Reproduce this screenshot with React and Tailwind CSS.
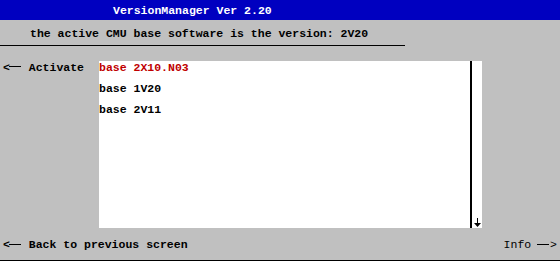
function Dash() {
  return <span className="inline-block w-[12px] h-[1px] bg-black align-middle mb-[2px] -ml-[1px] mr-[1px]" />;
}

export default function App() {
  const versions = [
    { name: "base 2X10.N03", active: true },
    { name: "base 1V20", active: false },
    { name: "base 2V11", active: false },
  ];

  return (
    <div
      className="w-[560px] h-[261px] bg-[#c0c0c0] flex flex-col text-[11.5px] font-bold text-black overflow-hidden"
      style={{ fontFamily: "'Liberation Mono', 'DejaVu Sans Mono', monospace" }}
    >
      {/* title bar */}
      <div className="h-[20px] bg-[#0000c0] text-white flex items-center pl-[113px] pt-[1px]">
        VersionManager Ver 2.20
      </div>

      {/* active version line */}
      <div className="h-[26px] w-[405px] border-b border-black flex items-center pl-[30px] pt-[2px]">
        the active CMU base software is the version: 2V20
      </div>

      {/* list area */}
      <div className="flex mt-[15px] h-[167px]">
        <div className="w-[99px] pl-[3px] leading-[11px] pt-[1px] whitespace-nowrap">
          &lt;<Dash /> Activate
        </div>
        <div className="w-[383px] bg-white flex">
          <div className="flex-1 flex flex-col gap-[10px] leading-[11px] pt-[1px]">
            {versions.map((v) => (
              <div key={v.name} className={v.active ? "text-[#c00000]" : ""}>
                {v.name}
              </div>
            ))}
          </div>
          <div className="w-[2px] bg-black" />
          <div className="w-[10px] flex flex-col justify-end items-center pb-[1px]">
            <svg width="7" height="9" viewBox="0 0 7 9">
              <rect x="3" y="0" width="1" height="8" fill="black" />
              <path d="M0 5h7L3.5 9z" fill="black" />
            </svg>
          </div>
        </div>
      </div>

      {/* footer */}
      <div className="flex-1 flex items-center justify-between pl-[3px] pr-[3px] pt-[2px] border-b border-black">
        <span className="whitespace-nowrap">
          &lt;<Dash /> Back to previous screen
        </span>
        <span className="font-normal whitespace-nowrap">
          Info <Dash />&gt;
        </span>
      </div>
    </div>
  );
}
